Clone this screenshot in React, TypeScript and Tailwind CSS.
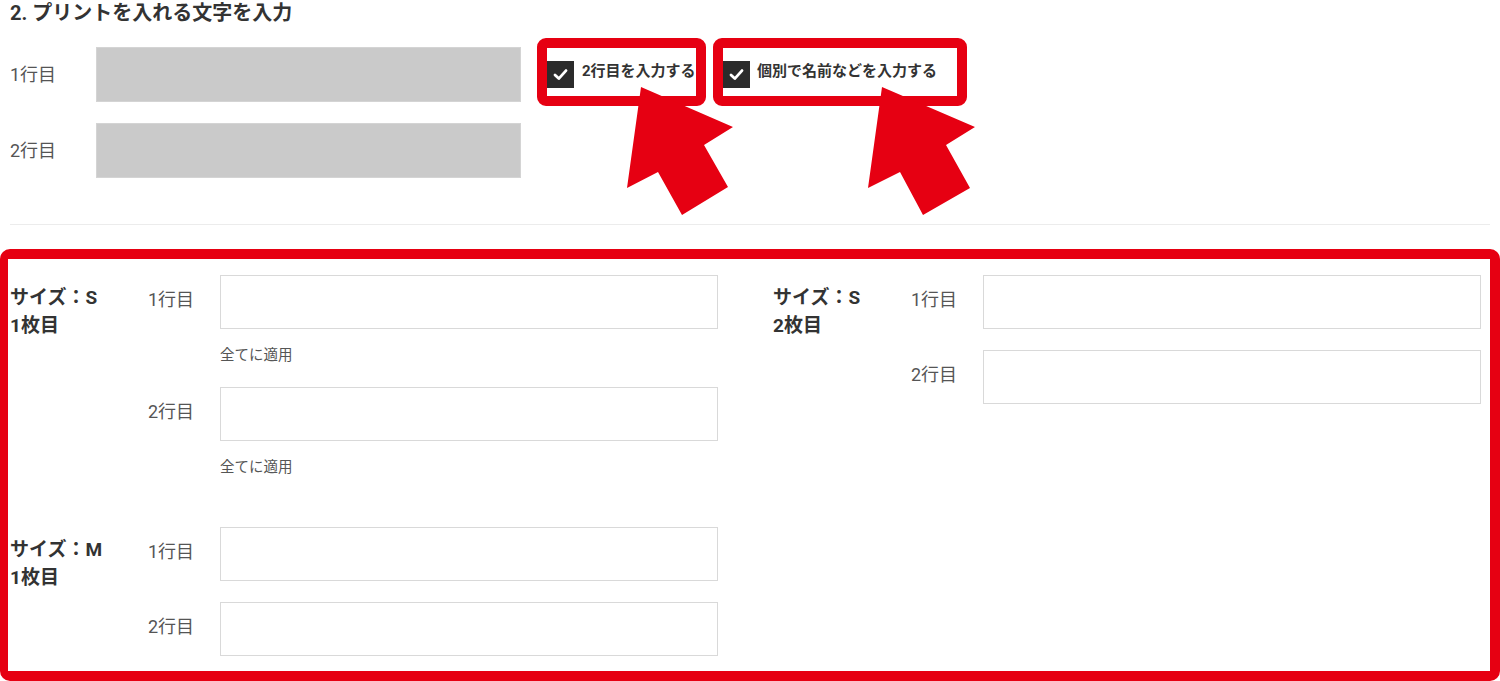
import React from 'react';

const font = "font-['Roboto','Noto_Sans_CJK_JP',sans-serif]";

function Check() {
  return (
    <span className="flex h-[27px] w-[27px] shrink-0 items-center justify-center bg-[#2b2b2b]">
      <svg width="15" height="13" viewBox="0 0 15 13" fill="none">
        <path d="M2 7 L5.8 10.6 L13 2.6" stroke="#fff" strokeWidth="2.8" strokeLinecap="round" strokeLinejoin="round" />
      </svg>
    </span>
  );
}

function LineRow({ label, apply }: { label: string; apply?: boolean }) {
  return (
    <div className="flex flex-col">
      <div className="flex h-[54px] items-center">
        <span className="w-[72px] pb-[5px] text-[18px] text-[#555]">{label}</span>
        <div className="h-[54px] w-[498px] border border-[#d9d9d9] bg-white" />
      </div>
      {apply && (
        <div className="ml-[72px] mt-[17px] h-[20px] text-[14.5px] leading-[20px] text-[#555]">全てに適用</div>
      )}
    </div>
  );
}

function SizeGroup({ size, nth, apply }: { size: string; nth: string; apply?: boolean }) {
  return (
    <div className="flex w-[708px]">
      <div className="w-[138px] pt-[9px] text-[19px] font-bold leading-[28px] text-[#333]">
        <div>サイズ：{size}</div>
        <div>{nth}</div>
      </div>
      <div className="flex flex-col gap-[21px]">
        <LineRow label="1行目" apply={apply} />
        <LineRow label="2行目" apply={apply} />
      </div>
    </div>
  );
}

export default function App() {
  return (
    <div className={`relative h-[681px] w-[1500px] overflow-hidden bg-white ${font}`}>
      <div className="pl-[10px]">
        <h2 className="h-[26px] text-[20px] font-bold leading-[26px] text-[#333]">2. プリントを入れる文字を入力</h2>

        <div className="mt-[12px] flex items-start">
          <div className="flex flex-col">
            <div className="mt-[9px] flex h-[55px] items-center">
              <span className="w-[86px] text-[18px] text-[#555]">1行目</span>
              <div className="h-[55px] w-[425px] border border-[#d4d4d4] bg-[#cacaca]" />
            </div>
            <div className="mt-[21px] flex h-[55px] items-center">
              <span className="w-[86px] text-[18px] text-[#555]">2行目</span>
              <div className="h-[55px] w-[425px] border border-[#d4d4d4] bg-[#cacaca]" />
            </div>
          </div>

          <div className="ml-[16px] flex h-[68px] w-[169px] items-start rounded-[9px] border-[10px] border-[#e60012]">
            <div className="mt-[13px]"><Check /></div>
            <span className="ml-[8px] mt-[15px] whitespace-nowrap text-[15px] font-bold leading-[16px] text-[#333]">2行目を入力する</span>
          </div>
          <div className="ml-[7px] flex h-[68px] w-[254px] items-start rounded-[9px] border-[10px] border-[#e60012]">
            <div className="mt-[13px]"><Check /></div>
            <span className="ml-[7px] mt-[15px] whitespace-nowrap text-[15px] font-bold leading-[16px] text-[#333]">個別で名前などを入力する</span>
          </div>
        </div>

        <div className="mr-[10px] mt-[46px] h-px bg-[#ececec]" />
      </div>

      <div className="mt-[24px] h-[432px] rounded-[10px] border-[10px] border-l-[8px] border-[#e60012] pl-[2px] pt-[16px]">
        <div className="flex gap-[55px]">
          <div className="flex flex-col gap-[49px]">
            <SizeGroup size="S" nth="1枚目" apply />
            <SizeGroup size="M" nth="1枚目" />
          </div>
          <SizeGroup size="S" nth="2枚目" />
        </div>
      </div>

      {/* annotation arrows */}
      <svg className="pointer-events-none absolute left-0 top-0" width="1500" height="681">
        <polygon points="641,87 733,127 704,145 728,187 682,215 658,172 627,188" fill="#e60012" />
        <polygon points="882,87 975,127 946,145 970,188 923,215 900,172 868,188" fill="#e60012" />
      </svg>
    </div>
  );
}
